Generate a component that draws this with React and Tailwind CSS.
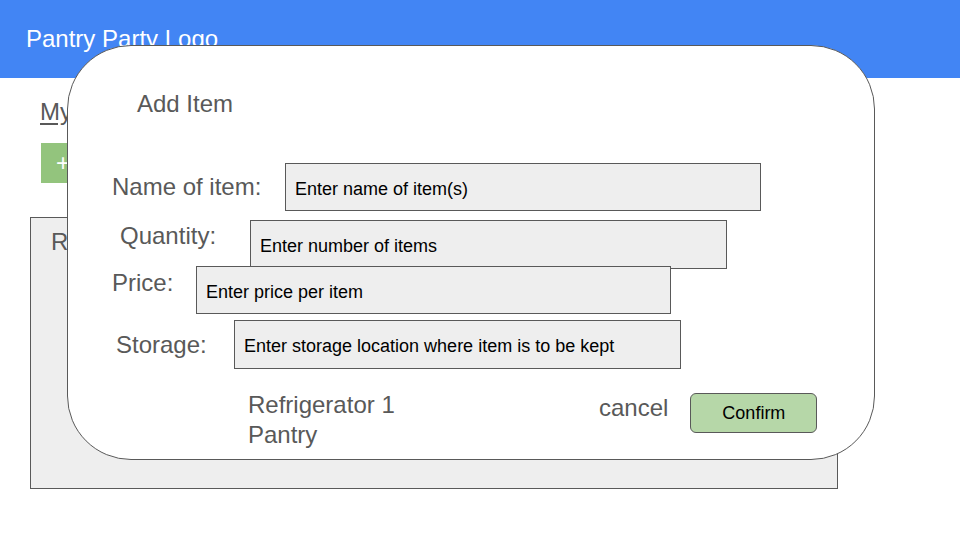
import React from 'react';

const fields = [
  { label: 'Name of item:', text: 'Enter name of item(s)', row: 'mt-[45px]', lab: 'w-[217px] pl-[44px] mt-[10px]', box: 'w-[476px] h-[48px] pt-[15px]' },
  { label: 'Quantity:', text: 'Enter number of items', row: 'mt-[9px]', lab: 'w-[182px] pl-[52px] mt-[2px]', box: 'w-[477px] h-[49px] pt-[15px]' },
  { label: 'Price:', text: 'Enter price per item', row: 'mt-[-3px]', lab: 'w-[128px] pl-[44px] mt-[3px]', box: 'w-[475px] h-[48px] pt-[15px]' },
  { label: 'Storage:', text: 'Enter storage location where item is to be kept', row: 'mt-[6px]', lab: 'w-[166px] pl-[48px] mt-[11px]', box: 'w-[447px] h-[49px] pt-[15px]' },
];

const App = () => {
  return (
    <div className="relative w-[960px] h-[540px] overflow-hidden bg-white font-['Liberation_Sans',Arial,sans-serif]">
      {/* header */}
      <div className="h-[78px] bg-[#4285f4] pt-[25px] pl-[26px]">
        <span className="text-[24px] leading-[28px] text-white">Pantry Party Logo</span>
      </div>

      {/* page behind the dialog */}
      <div className="pl-[30px]">
        <div className="mt-[20px] ml-[10px] text-[24px] leading-[28px] text-[#595959] underline underline-offset-[3px]">My Storage</div>
        <button
          type="button"
          className="mt-[17px] ml-[11px] w-[130px] h-[40px] bg-[#93c47d] text-white text-[24px] leading-[28px] text-left pl-[15px]"
        >
          + Add
        </button>
        <div className="mt-[34px] w-[808px] h-[272px] bg-[#eeeeee] border border-[#595959] pl-[20px] pt-[10px]">
          <span className="text-[24px] leading-[28px] text-[#595959]">Refrigerators</span>
        </div>
      </div>

      {/* Add item dialog */}
      <div className="absolute left-[67px] top-[45px] w-[808px] h-[415px] rounded-[64px] border border-[#595959] bg-white pt-[44px] flex flex-col text-[#595959]">
        <div className="pl-[69px] text-[24px] leading-[28px]">Add Item</div>

        {fields.map((f) => (
          <div key={f.label} className={`flex items-start ${f.row}`}>
            <div className={`shrink-0 text-[24px] leading-[28px] ${f.lab}`}>{f.label}</div>
            <div className={`shrink-0 bg-[#eeeeee] border border-[#595959] px-[9px] text-[18px] leading-[21px] text-black ${f.box}`}>
              {f.text}
            </div>
          </div>
        ))}

        <div className="flex items-start mt-[21px]">
          <div className="shrink-0 w-[531px] pl-[180px] text-[24px] leading-[30px]">
            <div>Refrigerator 1</div>
            <div>Pantry</div>
          </div>
          <div className="shrink-0 mt-[4px] text-[24px] leading-[28px]">cancel</div>
          <button
            type="button"
            className="shrink-0 ml-[22px] mt-[3px] w-[127px] h-[40px] rounded-[6px] bg-[#b6d7a8] border border-[#595959] text-black text-[18px] leading-[21px]"
          >
            Confirm
          </button>
        </div>
      </div>
    </div>
  );
};

export default App;
